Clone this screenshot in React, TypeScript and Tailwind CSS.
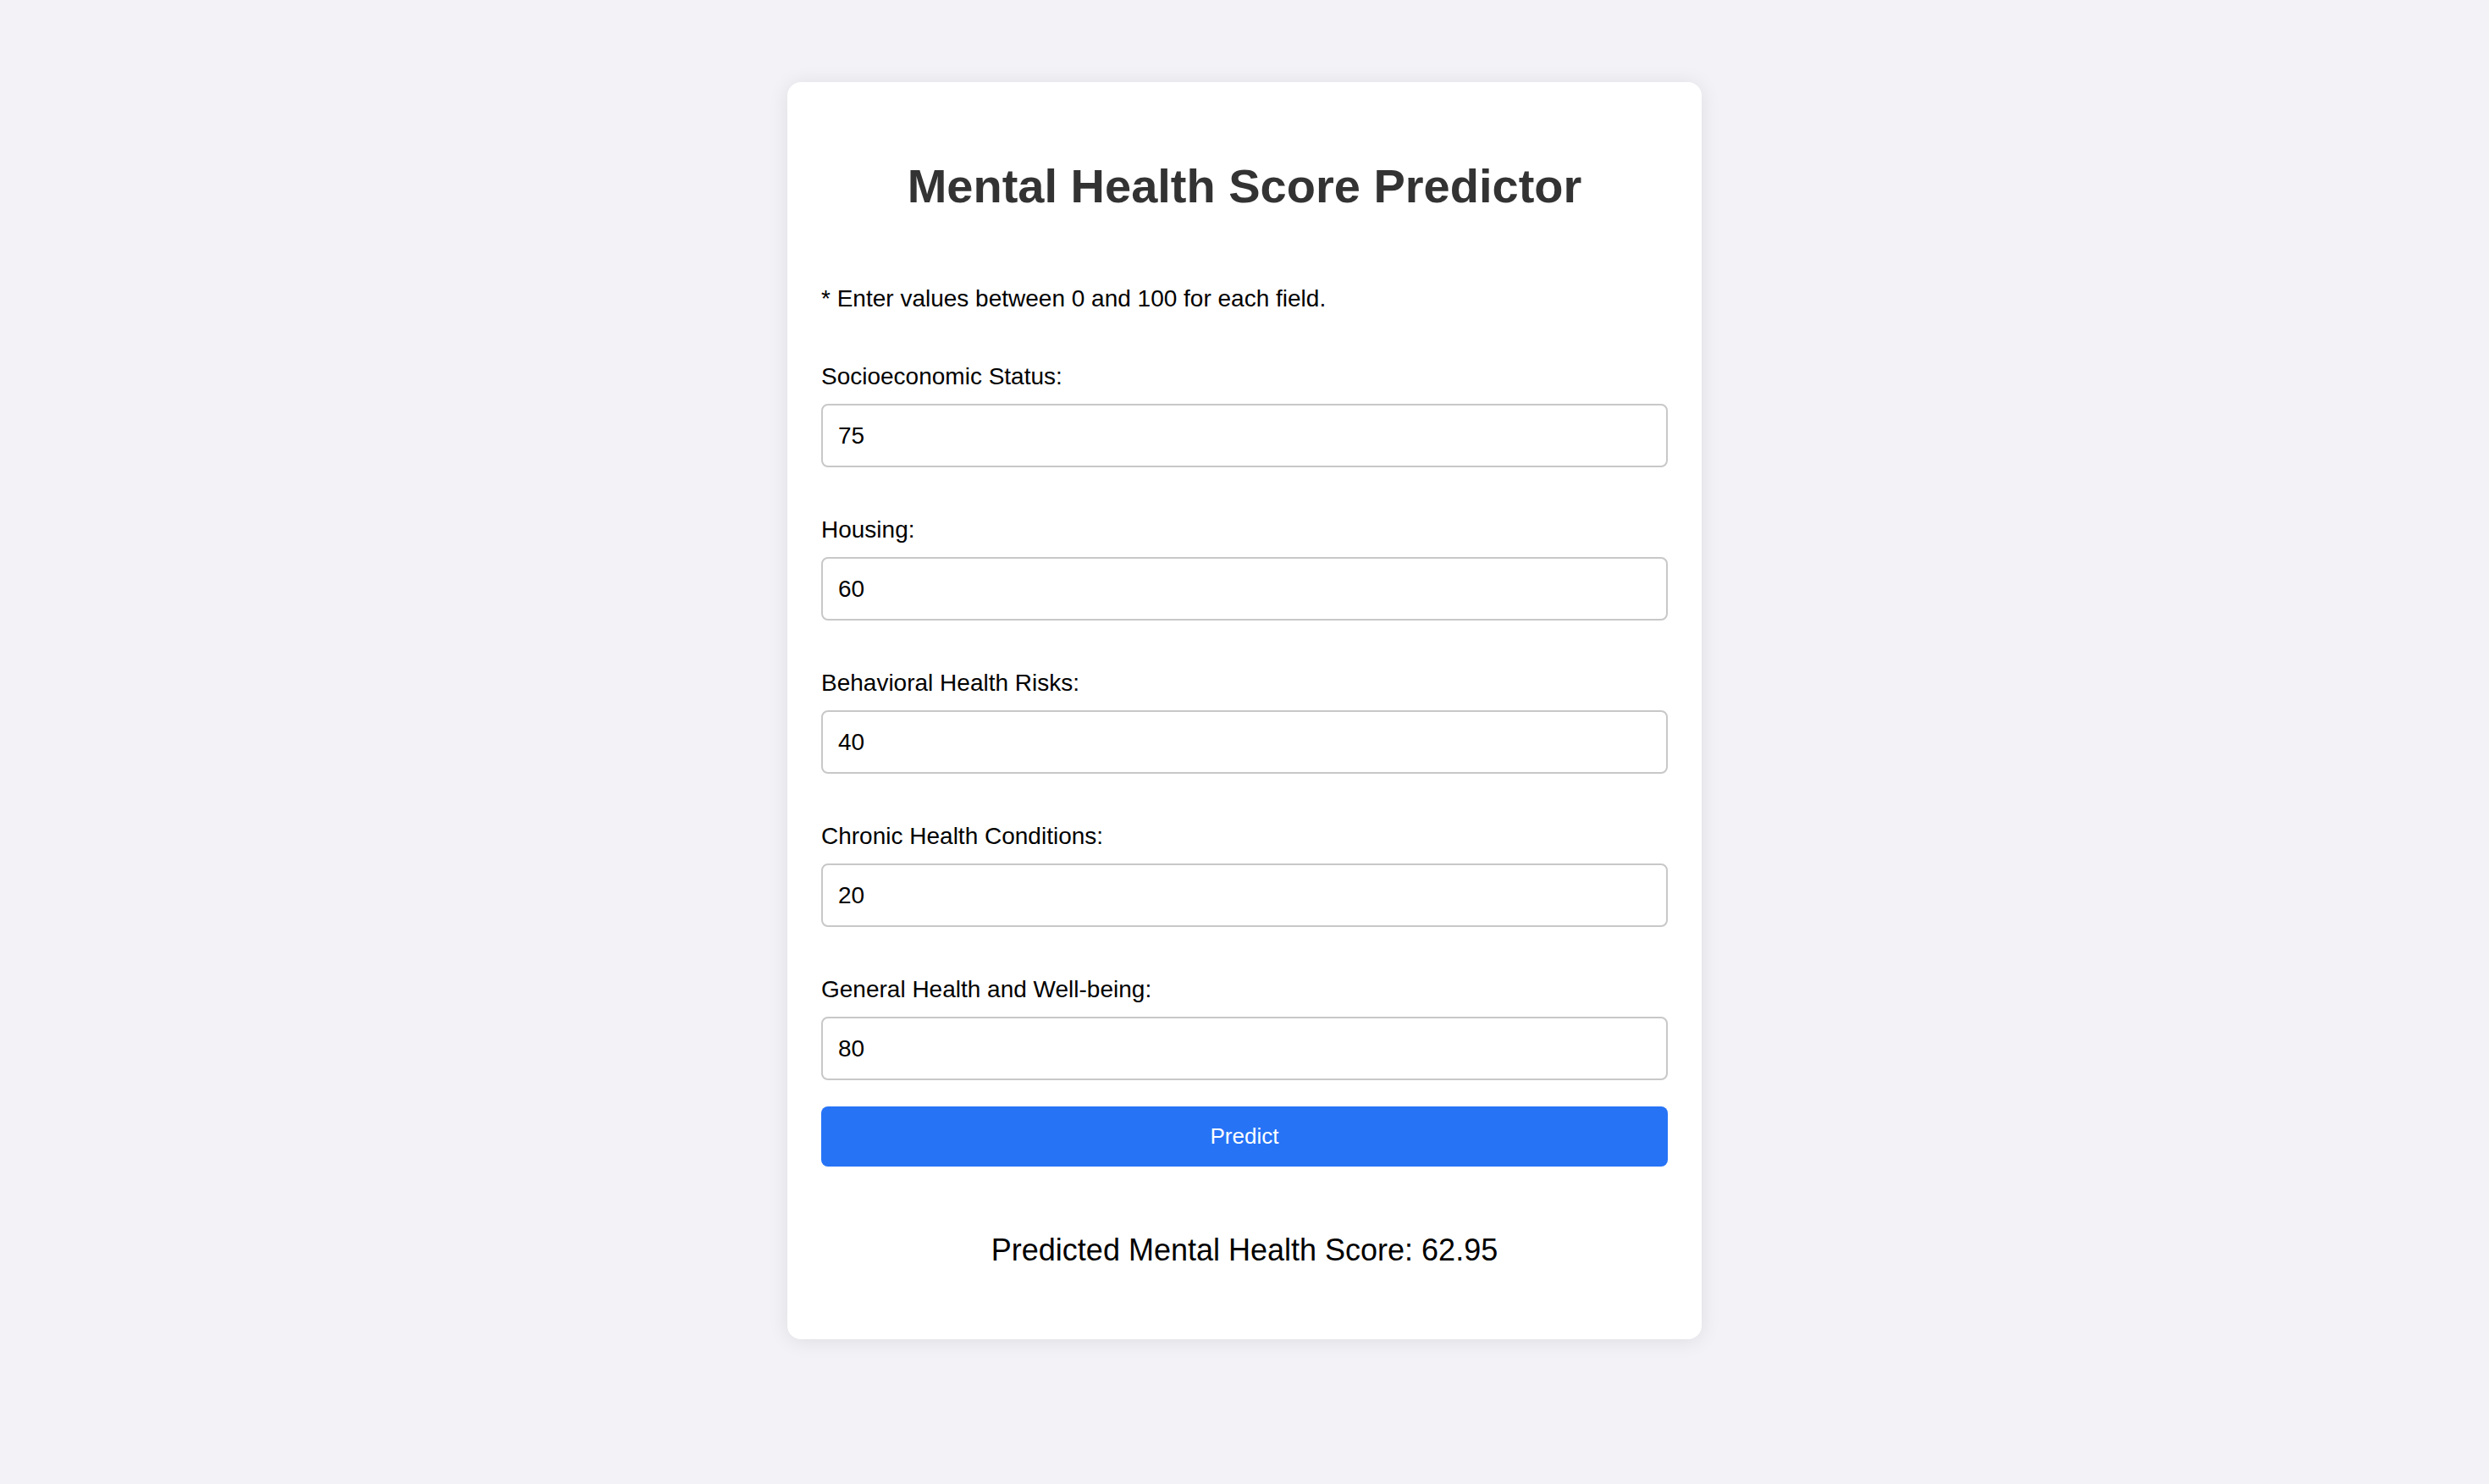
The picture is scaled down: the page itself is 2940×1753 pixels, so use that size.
import { useState } from "react"

const fields = [
  { key: "ses", label: "Socioeconomic Status:", value: "75" },
  { key: "housing", label: "Housing:", value: "60" },
  { key: "behavioral", label: "Behavioral Health Risks:", value: "40" },
  { key: "chronic", label: "Chronic Health Conditions:", value: "20" },
  { key: "general", label: "General Health and Well-being:", value: "80" },
]

export default function App() {
  const [values, setValues] = useState<Record<string, string>>(
    Object.fromEntries(fields.map((f) => [f.key, f.value]))
  )

  return (
    <div
      className="flex min-h-screen justify-center bg-[#f2f2f7] pt-[97px] pb-[100px] text-black"
      style={{ fontFamily: '"Liberation Sans", Arial, sans-serif' }}
    >
      <div className="h-fit w-[1080px] rounded-[16px] bg-white px-[40px] pt-[91px] pb-[85px] shadow-[0_2px_24px_rgba(0,0,0,0.09)]">
        <h1 className="text-center text-[56px] font-bold leading-[64px] text-[#333]">
          Mental Health Score Predictor
        </h1>

        <p className="mt-[85px] text-[28px] leading-[32px]">
          * Enter values between 0 and 100 for each field.
        </p>

        <form onSubmit={(e) => e.preventDefault()}>
          {fields.map((f, i) => (
            <div key={f.key} className={i === 0 ? "mt-[60px]" : "mt-[58px]"}>
              <label htmlFor={f.key} className="block text-[28px] leading-[32px]">
                {f.label}
              </label>
              <input
                id={f.key}
                type="text"
                value={values[f.key]}
                onChange={(e) => setValues({ ...values, [f.key]: e.target.value })}
                className="mt-[16px] block h-[75px] w-full rounded-[8px] border-2 border-[#c8c8c8] bg-white px-[18px] text-[28px] text-black outline-none"
              />
            </div>
          ))}

          <button
            type="submit"
            className="mt-[31px] block h-[71px] w-full rounded-[8px] bg-[#2673f6] text-[26px] text-white"
          >
            Predict
          </button>
        </form>

        <div className="mt-[78px] text-center text-[36px] leading-[41px]">
          Predicted Mental Health Score: 62.95
        </div>
      </div>
    </div>
  )
}
